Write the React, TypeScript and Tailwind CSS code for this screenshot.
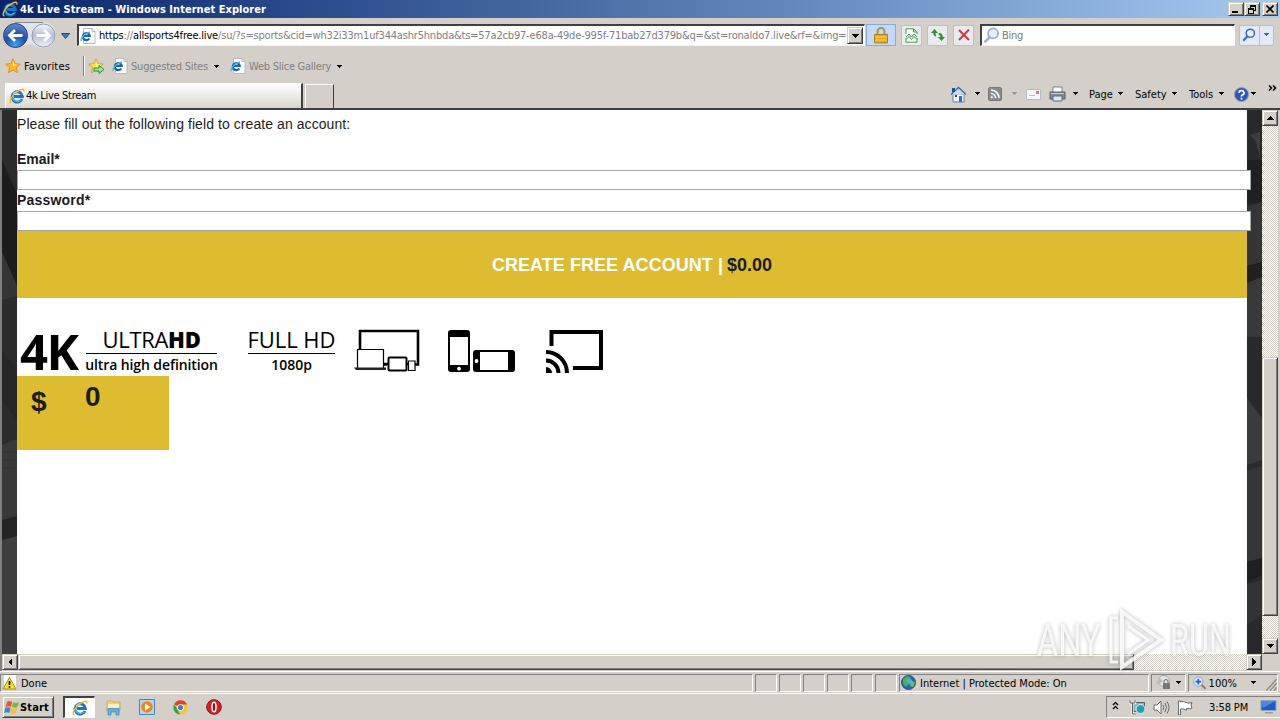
import type { ReactNode } from "react";
import clsx from "clsx";

const raised =
  "border border-t-[#d4d0c8] border-l-[#d4d0c8] border-r-[#404040] border-b-[#404040] shadow-[inset_1px_1px_0_#fff,inset_-1px_-1px_0_#808080] bg-[#d4d0c8]";
const sunken = "border border-t-[#808080] border-l-[#808080] border-r-white border-b-white";
const hatch = "bg-[repeating-conic-gradient(#fff_0_25%,#d4cfc6_0_50%)] bg-[length:2px_2px]";
const navButton =
  "flex h-[21px] w-[21px] shrink-0 items-center justify-center rounded-[2px] border border-[#b9bfcb] bg-[#e9ebee]";

function Caret({ className, color = "#000" }: { className?: string; color?: string }) {
  return (
    <svg className={clsx("shrink-0", className)} width="7" height="4" viewBox="0 0 7 4" shapeRendering="crispEdges">
      <path d="M0 0h7L3.5 4z" fill={color} />
    </svg>
  );
}

function SmallCaret({ className, color = "#000" }: { className?: string; color?: string }) {
  return (
    <svg className={clsx("shrink-0", className)} width="7" height="4" viewBox="0 0 7 4" shapeRendering="crispEdges">
      <path d="M1 0h5v1H1zM2 1h3v1H2zM3 2h1v1H3z" fill={color} />
    </svg>
  );
}

function Ie({ className }: { className?: string }) {
  return (
    <svg className={clsx("shrink-0", className)} width="16" height="16" viewBox="0 0 16 16" fill="none">
      <path d="M13 11A5.200 5.200 0 1 1 13.400 8.500H5" stroke="#1b74c4" strokeWidth="2.800" />
      <path d="M12.200 11.800A5 5 0 0 1 3.600 10" stroke="#42b4ec" strokeWidth="1.300" />
      <path d="M4 6.500a5 5 0 0 1 5.500-2.800" stroke="#8ad6f6" strokeWidth="1.300" />
      <path d="M2.400 15C-1 14 3 7 9 3c4-2.600 6.600-2.400 5.700.6" stroke="#f2b92c" strokeWidth="1.400" />
    </svg>
  );
}

function IePage({ className }: { className?: string }) {
  return (
    <svg className={clsx("shrink-0", className)} width="16" height="16" viewBox="0 0 16 16" fill="none">
      <path d="M3.500.5h8.500l3 3v12H3.500z" fill="#fff" stroke="#b4bac8" />
      <path d="M12 .5v3h3" stroke="#b4bac8" />
      <path d="M9.300 10.500a3.500 3.500 0 1 1 .5-2.500H3" stroke="#1c62ae" strokeWidth="2.200" />
      <path d="M1.500 13C-.5 11 4 5.500 10 4" stroke="#55b5e4" strokeWidth="1.300" />
    </svg>
  );
}

function Star({ className, add }: { className?: string; add?: boolean }) {
  return (
    <svg className={clsx("shrink-0", className)} width="16" height="16" viewBox="0 0 16 16">
      <path
        d="M8 .8l2.100 4.800 5.200.5-3.900 3.500 1.200 5.200L8 12.100l-4.600 2.700 1.200-5.200L.7 6.100l5.200-.5z"
        fill={add ? "#fbe14b" : "#fcb826"}
        stroke={add ? "#c0a72a" : "#d98b1c"}
        strokeWidth=".9"
      />
      <path d="M8 3l1.200 3.400 2.800.2-4 2z" fill="#fff2a0" />
      {add && <path d="M6 10h5V7.500l5 4-5 4V13H6z" fill="#a5e08c" stroke="#238a2a" strokeWidth=".9" />}
    </svg>
  );
}

function Magnifier({ size, color, className }: { size: number; color: string; className?: string }) {
  return (
    <svg className={clsx("shrink-0", className)} width={size} height={size} viewBox="0 0 16 16" fill="none" stroke={color}>
      <circle cx="9.500" cy="6" r="4.700" fill="#e6f0fb" strokeWidth="1.700" />
      <path d="M6.200 9.500L1.500 14.500" strokeWidth="2.400" />
    </svg>
  );
}

function TitleBar() {
  return (
    <div className="flex h-[18px] items-center bg-gradient-to-r from-[#0a246a] to-[#a6caf0] pr-[2px]">
      <Ie className="ml-[2px]" />
      <span className="ml-[2px] grow pt-[2px] text-[11px] font-bold tracking-[0.04px] text-white">
        4k Live Stream - Windows Internet Explorer
      </span>
      <div className={clsx(raised, "flex h-[14px] w-4 items-end pb-[2px] pl-[3px]")}>
        <div className="h-[2px] w-[6px] bg-black" />
      </div>
      <div className={clsx(raised, "flex h-[14px] w-4 items-center justify-center")}>
        <svg width="9" height="9" viewBox="0 0 9 9" fill="none" stroke="#000" shapeRendering="crispEdges">
          <path d="M2.500 3V.5h5v5H6M2.500 1.500h5M.5 3.500h5v5h-5zM.5 4.500h5" />
        </svg>
      </div>
      <div className={clsx(raised, "ml-[2px] flex h-[14px] w-4 items-center justify-center")}>
        <svg width="8" height="8" viewBox="0 0 8 8" stroke="#000" strokeWidth="1.600">
          <path d="M.5.5l7 7M7.500.5l-7 7" />
        </svg>
      </div>
    </div>
  );
}

function AddressRow() {
  return (
    <div className="flex h-[34px] items-center">
      <svg className="ml-px shrink-0" width="58" height="28" viewBox="0 0 58 28" fill="none">
        <defs>
          <radialGradient id="back" cx=".5" cy=".9" r=".9">
            <stop stopColor="#41a5ee" />
            <stop offset=".5" stopColor="#1d50a5" />
            <stop offset="1" stopColor="#6a8dca" />
          </radialGradient>
          <linearGradient id="fwd" x2="0" y2="1">
            <stop stopColor="#f4f6fb" />
            <stop offset=".5" stopColor="#b5bed4" />
            <stop offset="1" stopColor="#edf1fa" />
          </linearGradient>
        </defs>
        <path d="M14 1h28a13 13 0 0 1 0 26c-7 0-9-4-14-4s-7 4-14 4" fill="#e3e4eb" />
        <path d="M14 1.500h28" stroke="#8a8b9a" />
        <circle cx="14.500" cy="14.500" r="12" fill="url(#back)" stroke="#24417e" />
        <circle cx="42.500" cy="14.500" r="11.500" fill="url(#fwd)" stroke="#8f98ae" />
        <path d="M21.500 14.500H9M14 9l-5.500 5.500L14 20" stroke="#fff" strokeWidth="2.800" />
        <path d="M35.500 14.500H48M43 9l5.500 5.500L43 20" stroke="#fff" strokeWidth="2.800" />
      </svg>
      <svg className="mt-[2px] ml-[2px] shrink-0" width="9" height="6" viewBox="0 0 9 6">
        <path d="M.5.5h8l-4 5z" fill="#3f7cba" stroke="#1c4877" />
      </svg>
      <div className="ml-[7px] flex h-[22px] w-[788px] shrink-0 items-center border-t-2 border-l-2 border-r border-b border-t-[#404040] border-l-[#404040] border-r-white border-b-[#f4f2ee] bg-white">
        <IePage className="ml-px" />
        <span className="ml-[3px] w-[749px] shrink-0 pt-[2px] text-[11px] tracking-[-0.185px] whitespace-nowrap text-[#808080]">
          <span className="text-black">https</span>://<span className="text-black">allsports4free.live</span>
          /su/?s=sports&amp;cid=wh32i33m1uf344ashr5hnbda&amp;ts=57a2cb97-e68a-49de-995f-71bab27d379b&amp;q=&amp;st=ronaldo7.live&amp;rf=&amp;img=
        </span>
        <div className={clsx(raised, "-ml-px flex h-[17px] w-4 shrink-0 items-center justify-center")}>
          <Caret />
        </div>
      </div>
      <div className="ml-px flex h-[22px] w-[30px] shrink-0 items-center justify-center border border-[#8aa9e0] bg-[#c3dafb]">
        <svg width="14" height="17" viewBox="0 0 14 17" fill="none">
          <path d="M3.500 8V4.500a3.500 3.500 0 0 1 7 0V8" stroke="#a9914f" strokeWidth="2" />
          <path d="M.5 7.500h13v8.500H.5z" fill="#e9a91c" stroke="#b57b12" />
          <path d="M1 10h12M1 13h12" stroke="#f8d367" />
        </svg>
      </div>
      <div className={clsx(navButton, "ml-[5px]")}>
        <svg width="13" height="15" viewBox="0 0 13 15" fill="none" stroke="#3c9a44">
          <path d="M1 6V.8h7.500L12 4v2M8.500 1v3H12M1 10v4.200h11V10" fill="#fff" />
          <path d="M1 9l3-3 2.500 3L9 6l3 3M1 11.500l3-3 2.500 3 2.500-3 3 3" />
        </svg>
      </div>
      <div className={clsx(navButton, "ml-[5px]")}>
        <svg width="14" height="12" viewBox="0 0 14 12" fill="#2b9331">
          <path d="M3.500 0L0 4h2.300c0 2 .7 3.200 2.700 3.500V5.800C4.500 5.500 4.600 5 4.600 4H7z" />
          <path d="M10.500 12L14 8h-2.300c0-2.500-1-4-4-4v2c1.500 0 1.800.8 1.800 2H7z" />
        </svg>
      </div>
      <div className={clsx(navButton, "ml-[5px]")}>
        <svg width="12" height="12" viewBox="0 0 12 12" stroke="#cb3a41" strokeWidth="2">
          <path d="M1 1l10 10M11 .5L1 11" />
        </svg>
      </div>
      <div className="ml-[6px] flex h-[22px] w-[255px] shrink-0 items-center border-t-2 border-l-2 border-r border-b border-t-[#404040] border-l-[#404040] border-r-white border-b-[#f4f2ee] bg-white">
        <Magnifier size={17} color="#a1aec6" className="ml-[1px]" />
        <span className="ml-[2px] pt-[2px] text-[11px] tracking-[-0.3px] text-[#767676]">Bing</span>
      </div>
      <div className="ml-[4px] flex h-[21px] w-[35px] shrink-0 items-center rounded-[2px] border border-[#b4bfd5] bg-[#e3eaf6]">
        <Magnifier size={14} color="#3567c5" className="ml-[2px]" />
        <div className="ml-[3px] h-full w-px bg-[#b4bfd5]" />
        <SmallCaret className="ml-[3px]" color="#2869b7" />
      </div>
    </div>
  );
}

function FavoritesRow() {
  return (
    <div className="flex h-[28px] items-center text-[11px] whitespace-nowrap">
      <Star className="ml-[5px]" />
      <span className="ml-[3px] w-[59px] pt-[2px] tracking-[0.15px]">Favorites</span>
      <div className="h-[20px] w-[2px] border-l border-[#808080] bg-white" />
      <Star add className="ml-[3px]" />
      <IePage className="ml-[8px]" />
      <span className="ml-[3px] w-[82px] pt-[3px] tracking-[-0.2px] text-[#808080]">Suggested Sites</span>
      <SmallCaret className="mt-px" />
      <IePage className="ml-[10px]" />
      <span className="ml-[3px] w-[87px] pt-[3px] tracking-[-0.25px] text-[#808080]">Web Slice Gallery</span>
      <SmallCaret className="mt-px" />
    </div>
  );
}

function TabRow() {
  return (
    <div className="flex h-[30px] border-b-2 border-[#404040] text-[11px] whitespace-nowrap">
      <div className="mt-[3px] ml-[5px] flex w-[298px] shrink-0 items-center border-t border-r-2 border-l border-t-white border-r-[#404040] border-l-white bg-gradient-to-b from-white to-[#dad6ce]">
        <Ie className="ml-[3px]" />
        <span className="ml-px pt-px tracking-[-0.3px]">4k Live Stream</span>
      </div>
      <div className="mt-[4px] ml-[2px] w-[29px] shrink-0 border-t border-r border-l border-t-white border-r-[#404040] border-l-white" />
      <div className="ml-[616px] flex shrink-0 items-center">
        <svg width="17" height="17" viewBox="0 0 17 17">
          <path d="M3 8h11v8H3z" fill="#f3f7fc" stroke="#6384b5" />
          <path d="M1 8.500l7.500-7 7.500 7" fill="#c9d9ee" stroke="#3d67a6" strokeWidth="1.300" />
          <path d="M2 2h3v4H2z" fill="#274e91" />
          <path d="M9 10h3v6H9z" fill="#2673bb" />
          <path d="M5 9h2v2H5z" fill="#444" />
        </svg>
        <SmallCaret className="ml-[7px]" />
        <svg className="ml-[7px]" width="14" height="14" viewBox="0 0 14 14" fill="none" stroke="#fff" strokeWidth="1.600">
          <rect x=".5" y=".5" width="13" height="13" rx="1.500" fill="#8b8b8b" stroke="#777" strokeWidth="1" />
          <path d="M3 3a8 8 0 0 1 8 8M3 6.500A4.500 4.500 0 0 1 7.500 11" />
          <circle cx="3.800" cy="10.200" r=".8" fill="#fff" strokeWidth=".6" />
        </svg>
        <SmallCaret className="ml-[9px]" color="#999" />
        <svg className="ml-[8px]" width="15" height="11" viewBox="0 0 15 11">
          <path d="M.5.5h14v10H.5z" fill="#f7f8fb" stroke="#b6bbc8" />
          <path d="M10 2h3v3h-3z" fill="#d47b83" />
          <path d="M3 6.500h6" stroke="#b9bfcc" />
        </svg>
        <svg className="ml-[8px]" width="17" height="16" viewBox="0 0 17 16">
          <path d="M4 1h9v6H4z" fill="#fff" stroke="#7d8189" />
          <path d="M1 6h15v7H1z" fill="#858a93" stroke="#5c6068" />
          <path d="M2 7.500h13" stroke="#c9ced8" />
          <path d="M4 10h9v5H4z" fill="#dceaf6" stroke="#5d6b7c" />
        </svg>
        <SmallCaret className="ml-[6px]" />
        <span className="ml-[10px] w-[28px] pt-[2px]">Page</span>
        <SmallCaret />
        <span className="ml-[11px] w-[36px] pt-[2px]">Safety</span>
        <SmallCaret />
        <span className="ml-[11px] w-[29px] pt-[2px]">Tools</span>
        <SmallCaret />
        <svg className="ml-[9px]" width="15" height="15" viewBox="0 0 15 15" fill="none">
          <circle cx="7.500" cy="7.500" r="7" fill="#2c57b4" stroke="#8f9fc2" />
          <path d="M5 5.800a2.500 2.200 0 1 1 3.500 2c-.8.4-1 .8-1 1.700M7.500 10.800v1.700" stroke="#fff" strokeWidth="1.800" />
        </svg>
        <SmallCaret className="ml-px" />
        <svg className="mb-[13px] ml-[11px]" width="9" height="6" viewBox="0 0 9 6" fill="none" stroke="#000" strokeWidth="1.500">
          <path d="M1 .5L3.500 3 1 5.500M5 .5L7.500 3 5 5.500" />
        </svg>
      </div>
    </div>
  );
}

// visible edges of the page's stadium photo
function PhotoLeft() {
  return (
    <svg className="shrink-0" width="15" height="544" viewBox="0 0 15 544">
      <path d="M0 0h15v544H0z" fill="#2b2b2b" />
      <path d="M0 50l15 34v92L0 142z" fill="#1c1c1c" />
      <path d="M0 142l15 34v10L0 190z" fill="#353535" />
      <path d="M0 240l15 20v50L0 290z" fill="#262626" />
      <path d="M0 335l15-6v80L0 412z" fill="#393939" />
      <path d="M0 342h15M0 350h15M0 358h15" stroke="#303030" />
      <path d="M0 410l15-4v20L0 430z" fill="#222" />
      <path d="M0 430l15-4v118H0z" fill="#3e3e3e" />
    </svg>
  );
}

function PhotoRight() {
  return (
    <svg className="shrink-0" width="15" height="544" viewBox="0 0 15 544">
      <path d="M0 0h15v544H0z" fill="#292929" />
      <path d="M3 25l10-3v25L8 30z" fill="#3c3c3c" />
      <path d="M0 50h15v42L0 94z" fill="#202020" />
      <path d="M0 97l15-5v60L0 156z" fill="#353535" />
      <path d="M0 156l15-4v15L0 173z" fill="#202020" />
      <path d="M0 173l15-6v60H0z" fill="#383838" />
      <path d="M0 288l15 20v55H0z" fill="#3b3b3b" />
      <path d="M0 355l15-5v6L0 361z" fill="#2b2b2b" />
      <path d="M0 361l15-5v92L0 452z" fill="#363636" />
      <path d="M0 452l15-4v17L0 472z" fill="#202020" />
      <path d="M0 474l15-4v35L0 515z" fill="#333" />
    </svg>
  );
}

function FeatureLogos() {
  return (
    <div className="mt-[31px] flex h-[47px] font-['Open_Sans',sans-serif] whitespace-nowrap text-black">
      <span className="ml-[3px] w-[66px] text-[49px] leading-[45px] font-bold tracking-[-1.5px]">4K</span>
      <div className="flex w-[131px] flex-col items-center">
        <span className="text-[22px] leading-[21px] font-medium tracking-[-0.3px]">
          ULTRA<span className="font-extrabold">HD</span>
        </span>
        <div className="mt-[3px] h-px w-full shrink-0 bg-black" />
        <span className="text-[14px] leading-[21px] font-semibold tracking-[-0.1px]">ultra high definition</span>
      </div>
      <div className="ml-[31px] flex w-[87px] flex-col items-center">
        <span className="text-[22px] leading-[21px] font-medium tracking-[-0.05px]">FULL HD</span>
        <div className="mt-[3px] h-px w-full shrink-0 bg-black" />
        <span className="text-[14px] leading-[21px] font-semibold">1080p</span>
      </div>
      <svg className="ml-[18px] shrink-0" width="67" height="46" viewBox="0 0 67 46" fill="none" stroke="#000">
        <path d="M7 20V2h58v33.500h-5M34 35.500h-5" strokeWidth="2.600" />
        <path d="M4.500 39V20.500h26V39" fill="#fff" strokeWidth="1.200" />
        <path d="M1 38.500h32v2.500H3z" fill="#222" stroke="none" />
        <rect x="35.500" y="28.500" width="18" height="13" rx="1" fill="#fff" strokeWidth="2" />
        <path d="M55.500 32h6.500v9.500h-6.500z" fill="#fff" strokeWidth="1.200" />
        <path d="M30 35h5M53 35h3" strokeWidth="2.500" />
      </svg>
      <svg className="ml-[28px] shrink-0" width="68" height="46" viewBox="0 0 68 46">
        <rect x="0" y="1" width="22" height="42" rx="3" fill="#000" />
        <path d="M2 8h18v28H2z" fill="#fff" />
        <circle cx="11" cy="39.700" r="1.900" fill="#fff" />
        <rect x="25" y="21" width="42" height="22" rx="3" fill="#000" />
        <path d="M32 23h28v18H32z" fill="#fff" />
        <circle cx="28.500" cy="32" r="1.900" fill="#fff" />
      </svg>
      <svg className="ml-[30px] shrink-0" width="58" height="46" viewBox="0 0 58 46" fill="none" stroke="#000" strokeWidth="4">
        <path d="M5.500 17V3h49.500v36H27" />
        <path d="M0 23a21 21 0 0 1 21 21M0 31.500A12.500 12.500 0 0 1 12.500 44" />
        <path d="M0 38a6 6 0 0 1 6 6H0z" fill="#000" stroke="none" />
      </svg>
    </div>
  );
}

function WebPage() {
  return (
    <div className="h-full w-[1230px] shrink-0 bg-white font-['Liberation_Sans',Arial,sans-serif] text-[14px] whitespace-nowrap text-[#1c1c1c] [font-stretch:normal]">
      <p className="h-[41px] pt-[4px] leading-[20px] tracking-[0.07px]">
        Please fill out the following field to create an account:
      </p>
      <label className="block h-[19px] leading-[16px] font-bold">Email*</label>
      <input className="relative block h-[20px] w-[1234px] border border-[#a5a5a5] bg-white" type="text" />
      <label className="block h-[21px] leading-[20px] font-bold tracking-[0.2px]">Password*</label>
      <input className="relative block h-[20px] w-[1234px] border border-[#a5a5a5] bg-white" type="password" />
      <button className="flex h-[67px] w-full items-center justify-center bg-[#ddbc31] pt-px text-[18px] font-bold">
        <span className="tracking-[0.05px] text-white">CREATE FREE ACCOUNT |</span>
        <span className="ml-[4px]">$0.00</span>
      </button>
      <FeatureLogos />
      <div className="flex h-[74px] w-[152px] bg-[#ddbc31] text-[28px] leading-[32px] font-bold">
        <span className="mt-[10px] ml-[14px] w-[54px]">$</span>
        <span className="mt-[5px]">0</span>
      </div>
    </div>
  );
}

function ScrollButton({ d }: { d: string }) {
  return (
    <div className={clsx(raised, "flex h-4 w-4 shrink-0 items-center justify-center")}>
      <svg width="8" height="8" viewBox="0 0 8 8" shapeRendering="crispEdges">
        <path d={d} />
      </svg>
    </div>
  );
}

function Viewport() {
  return (
    <div className="h-[561px] border-l-2 border-[#808080]">
      <div className="flex h-[544px]">
        <PhotoLeft />
        <WebPage />
        <PhotoRight />
        <div className={clsx(hatch, "flex h-full w-4 flex-col")}>
          <ScrollButton d="M0 6h8L4 2z" />
          <div className={clsx(raised, "mt-[231px] h-[259px] w-4")} />
          <div className="mt-auto">
            <ScrollButton d="M0 2h8L4 6z" />
          </div>
        </div>
      </div>
      <div className={clsx(hatch, "flex h-4 w-[1260px]")}>
        <ScrollButton d="M6 0v8L2 4z" />
        <div className={clsx(raised, "h-4 w-[1116px]")} />
        <div className="ml-auto">
          <ScrollButton d="M2 0v8l4-4z" />
        </div>
      </div>
    </div>
  );
}

function StatusPanel({ className, children }: { className?: string; children?: ReactNode }) {
  return <div className={clsx(sunken, "flex h-[18px] shrink-0 items-center", className)}>{children}</div>;
}

function StatusBar() {
  return (
    <div className="flex h-[22px] items-center gap-[2px] border-t border-white text-[11px] whitespace-nowrap">
      <StatusPanel className="w-[753px]">
        <svg className="ml-[1px]" width="15" height="15" viewBox="0 0 15 15">
          <path d="M2 0h12v14H2z" fill="#fff" />
          <path d="M7.500 2.500l6.500 11.500H1z" fill="#f9df2b" stroke="#a88f1c" />
          <path d="M7.500 6v4M7.500 11.300v1.500" stroke="#000" strokeWidth="1.600" />
        </svg>
        <span className="ml-[4px] pt-[3px]">Done</span>
      </StatusPanel>
      {[0, 1, 2, 3, 4, 5].map((i) => (
        <StatusPanel key={i} className="w-[22px]" />
      ))}
      <StatusPanel className="w-[250px]">
        <svg className="ml-[1px]" width="15" height="15" viewBox="0 0 15 15">
          <circle cx="7.500" cy="7.500" r="7" fill="#2267b5" stroke="#2b527c" />
          <path d="M2 4c3-4 7-3 8-1L7 6l1 3-3 3-3-3z" fill="#46b34c" />
          <path d="M10 6l4 1-2 5-3-1z" fill="#67c567" />
          <path d="M5 5q3-3 6 0v3q-3 2-4 0z" fill="#5aa9e6" />
        </svg>
        <span className="ml-[4px] pt-[3px]">Internet | Protected Mode: On</span>
      </StatusPanel>
      <StatusPanel className="w-[35px]">
        <svg className="ml-[3px]" width="17" height="15" viewBox="0 0 17 15" fill="none">
          <circle cx="9" cy="6" r="5.500" fill="#e7e7e7" stroke="#aaa" />
          <path d="M1 8l4-5 3 3-4 4z" fill="#bdbdbd" />
          <path d="M9 8V6.500a2 2 0 0 1 4 0V8" stroke="#666" />
          <path d="M8 8h7v6H8z" fill="#777" />
        </svg>
        <SmallCaret className="ml-[3px]" />
      </StatusPanel>
      <StatusPanel className="w-[90px]">
        <svg className="ml-[4px]" width="14" height="14" viewBox="0 0 14 14" fill="none">
          <path d="M8.500 8.500l4.500 4.500" stroke="#8a7a5f" strokeWidth="2" />
          <circle cx="5.500" cy="5.500" r="4.800" fill="#e4effc" stroke="#76a5de" />
          <path d="M5.500 2.500v6M2.500 5.500h6" stroke="#1f5fbc" strokeWidth="1.800" />
        </svg>
        <span className="ml-[2px] w-[43px] pt-[3px]">100%</span>
        <SmallCaret />
        <svg className="ml-[9px] self-end" width="11" height="12" viewBox="0 0 11 12" stroke="#8a867e" strokeWidth="1.300">
          <path d="M0 12L11 0M4 12l7-8M8 12l3-3.500" />
        </svg>
      </StatusPanel>
    </div>
  );
}

function Taskbar() {
  return (
    <div className="flex h-[27px] items-start border-t border-white pt-[2px] text-[11px] whitespace-nowrap">
      <div className={clsx(raised, "ml-[2px] flex h-[22px] w-[52px] items-center")}>
        <svg className="ml-[1px]" width="16" height="15" viewBox="0 0 16 15">
          <path d="M3 2c2-1.500 3.500-1 5 0L7 7C5 6 3.500 6 1.500 7z" fill="#e8562a" />
          <path d="M9 2.300c2 1 4 1 6-.3l-1.500 5c-2 1-3.500 1-5.500 0z" fill="#7bb836" />
          <path d="M1.300 8c2-1 3.500-1 5.300 0l-1.300 5c-2-1-3.300-1-5.300 0z" fill="#3d83d4" />
          <path d="M7.600 8.300c2 1 3.500 1 5.500 0l-1.400 5c-2 1-3.500 1-5.400 0z" fill="#f6c12d" />
        </svg>
        <span className="pt-[2px] font-bold tracking-[0.15px]">Start</span>
      </div>
      <div className="ml-[9px] flex h-[22px] w-[32px] items-center justify-center border-t-2 border-l-2 border-r border-b border-t-[#404040] border-l-[#404040] border-r-white border-b-white bg-white">
        <Ie />
      </div>
      <svg className="mt-[4px] ml-[11px]" width="15" height="16" viewBox="0 0 15 16">
        <path d="M1 1h5l1 1h7v9H1z" fill="#efd372" stroke="#bb9d46" strokeWidth=".7" />
        <path d="M2 4h11v4H2z" fill="#fbf2bb" />
        <path d="M2 15V8.500h11V15h-3v-3H5v3z" fill="#61afe0" stroke="#3d85ba" strokeWidth=".7" />
      </svg>
      <svg className="mt-[3px] ml-[18px]" width="16" height="16" viewBox="0 0 16 16">
        <path d="M.5.5h15v15H.5z" fill="#b8d6f1" stroke="#4884c3" />
        <circle cx="8" cy="8" r="5.800" fill="#f08517" />
        <path d="M6 4.500v7l5.500-3.500z" fill="#fff" />
      </svg>
      <svg className="mt-[4px] ml-[18px]" width="15" height="15" viewBox="0 0 15 15">
        <circle cx="7.500" cy="7.500" r="7" fill="#fbc72d" />
        <path d="M7.500 7.500L1.200 4.200A7.100 7.100 0 0 1 14 4.500H7.500z" fill="#de3f32" />
        <path d="M1.200 4.200L5 10l2 4.500A7 7 0 0 1 1.200 4.200z" fill="#37a450" />
        <circle cx="7.500" cy="7.500" r="3.300" fill="#fff" />
        <circle cx="7.500" cy="7.500" r="2.600" fill="#3f7de0" />
      </svg>
      <svg className="mt-[3px] ml-[18px]" width="16" height="16" viewBox="0 0 16 16">
        <circle cx="8" cy="8" r="7.300" fill="#c9252b" stroke="#8a1418" />
        <ellipse cx="8" cy="8" rx="2" ry="4.800" fill="#8a1116" stroke="#fff" strokeWidth="1.500" />
      </svg>
      <div className={clsx(sunken, "ml-auto flex h-[22px] w-[174px] items-center border-r-0")}>
        <svg className="mb-[3px] ml-[5px]" width="7" height="9" viewBox="0 0 7 9" fill="none" stroke="#000" strokeWidth="1.300">
          <path d="M1 4l2.500-2.500L6 4M1 8l2.500-2.500L6 8" />
        </svg>
        <svg className="ml-[10px]" width="17" height="16" viewBox="0 0 17 16" fill="none">
          <path d="M4.500 3.500h11v9h-11z" fill="#87b8b9" stroke="#555f68" />
          <circle cx="11.500" cy="10" r="4.500" fill="#2c9aaa" stroke="#e6f3f3" />
          <path d="M1 1v3h5V1M3.500 4v11H7" stroke="#fff" strokeWidth="2.400" />
          <path d="M1 1v3h5V1M3.500 4v11H7" stroke="#555" />
        </svg>
        <svg className="ml-[7px]" width="17" height="15" viewBox="0 0 17 15" fill="none" stroke="#6d6d6d">
          <path d="M1 5h3l4-4v13l-4-4H1z" fill="#fff" />
          <path d="M10 5q1.500 2.500 0 5M12 3q3 4.500 0 9M14 1.500q4 6 0 12" />
        </svg>
        <svg className="ml-[7px]" width="17" height="15" viewBox="0 0 17 15" fill="#fff" stroke="#666">
          <path d="M1.500 1v14h2V9c3-1 4 1 6 1V8.500c2 0 3.500.5 5.500-.5l-1-3 1-2.500c-2 1-4 .5-6 0-2-1-3.500-1.500-5.500-.5V1z" />
        </svg>
        <span className="ml-[15px] w-[51px] pt-[2px] tracking-[-0.1px]">3:58 PM</span>
        <svg className="shrink-0" width="17" height="14" viewBox="0 0 17 14">
          <path d="M1 .5h15v10H1z" fill="#235cc0" stroke="#8da4c5" />
          <path d="M1.500 1h14L3 8z" fill="#4b8ae0" />
          <path d="M5 12h8v1.500H5z" fill="#99a" />
        </svg>
      </div>
    </div>
  );
}

function Watermark() {
  return (
    <div className="pointer-events-none absolute top-[608px] left-[1037px] flex h-[64px] w-[200px] items-center font-['Roboto',sans-serif] text-[44px] leading-none text-white/80 drop-shadow-[0_0_2px_rgba(0,0,0,0.35)] [font-stretch:normal]">
      <span className="w-[72px] origin-left scale-x-[0.74] pt-[2px]">ANY</span>
      <svg className="shrink-0" width="56" height="62" viewBox="0 0 56 62" fill="none" stroke="#fff" strokeOpacity=".85">
        <path d="M13 3L52 31 13 58V3z" strokeWidth="4" />
        <path d="M19 17l20 14-20 14" strokeWidth="3" />
        <path d="M9 9H2v44h7" strokeWidth="3" />
      </svg>
      <span className="ml-[5px] origin-left scale-x-[0.7] pt-[2px]">RUN</span>
    </div>
  );
}

export default function App() {
  return (
    <div className="relative h-[720px] w-[1280px] overflow-hidden bg-[#d4cfc8] font-['DejaVu_Sans_Condensed','DejaVu_Sans',sans-serif] text-black [font-stretch:condensed]">
      <TitleBar />
      <AddressRow />
      <FavoritesRow />
      <TabRow />
      <Viewport />
      <StatusBar />
      <Taskbar />
      <Watermark />
    </div>
  );
}
